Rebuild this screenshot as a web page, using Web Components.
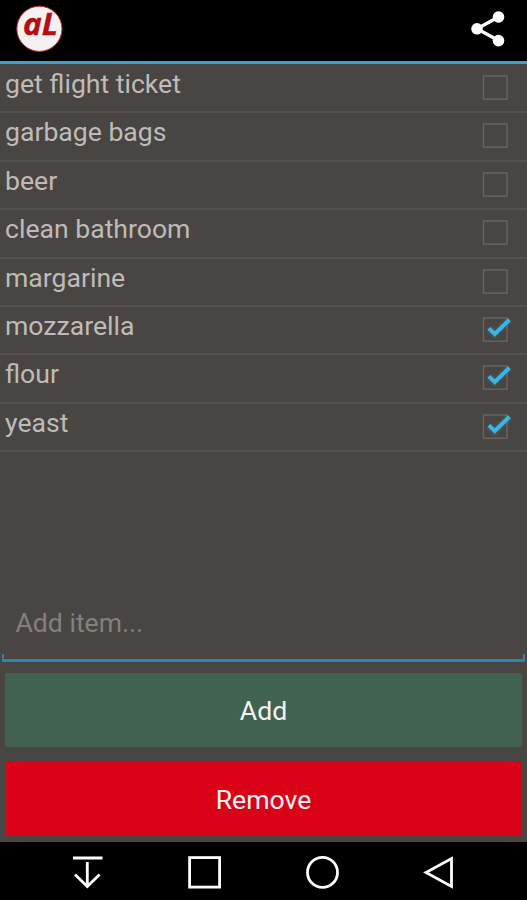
<!DOCTYPE html>
<html lang="en">
<head>
<meta charset="utf-8">
<title>Shopping list</title>
<style>
html,body{margin:0;height:100%;background:#494543;overflow:hidden;font-family:Roboto,"Liberation Sans",sans-serif}
</style>
</head>
<body>
<list-app></list-app>
<script>
const define = (name, html, setup) => customElements.define(name, class extends HTMLElement {
  constructor() {
    super();
    this.attachShadow({ mode: 'open' }).innerHTML = html;
  }
  connectedCallback() { if (setup) setup(this); }
});

define('app-bar', `
<style>
:host{display:flex;box-sizing:border-box;height:64px;flex:none;background:#000;border-bottom:3px solid #33a5d4;justify-content:space-between;padding:5px 20px 0 15px}
svg{display:block;overflow:visible}
.logo{width:48px;height:48px}
.share{width:38px;height:38px;margin-top:5px}
text{font:italic bold 29.5px "Open Sans","Noto Sans",sans-serif;fill:#b50d12;stroke:#b50d12;stroke-width:.4}
</style>
<svg class="logo" viewBox="0 0 48 48"><circle cx="24.4" cy="23.8" r="22.6" fill="#f3f1f1" stroke="#c02a2d" stroke-width="1"/><text x="8" y="29.8" textLength="35" lengthAdjust="spacingAndGlyphs">aL</text></svg>
<svg class="share" viewBox="0 0 38 38"><path d="M29.5 7 8 18.8 29.5 30.6" fill="none" stroke="#fff" stroke-width="3.4"/><g fill="#fff"><circle cx="29.5" cy="7" r="5.8"/><circle cx="8" cy="18.8" r="5.8"/><circle cx="29.5" cy="30.6" r="5.8"/></g></svg>`);

define('check-box', `
<style>
:host{display:block;width:30px;height:30px}
svg{display:block}
.tick{display:none}
:host([checked]) .tick{display:block}
</style>
<svg width="30" height="30" viewBox="0 0 30 30" fill="none"><rect x="1.5" y="5" width="23.5" height="23.2" stroke="#676361" stroke-width="1.5"/><g class="tick"><path d="M6.8 15.4 12.8 21 27.5 6.7" stroke="#33b5e5" stroke-opacity=".12" stroke-width="8"/><path d="M6.8 15.4 12.8 21 27.5 6.7" stroke="#38b6ea" stroke-width="4"/></g></svg>`);

define('list-item', `
<style>
:host{display:flex;box-sizing:border-box;height:48.4px;border-bottom:2px solid #555150;padding:0 15px 0 5px;justify-content:space-between;align-items:flex-start;color:#bebbb9;font-size:26.6px;line-height:32px}
span{padding-top:3px}
check-box{margin-top:6px}
</style>
<span><slot></slot></span><check-box></check-box>`, el => {
  el.shadowRoot.querySelector('check-box').toggleAttribute('checked', el.hasAttribute('checked'));
});

define('item-field', `
<style>
:host{display:flex;flex-direction:column;height:74px;padding:0 2px;color:#84807e;font-size:26.6px;line-height:32px}
span{padding:19px 0 0 13.5px;flex:1}
i{display:block;box-sizing:border-box;height:8px;border:2px solid #2b86ad;border-top:0;border-bottom-width:3px}
</style>
<span><slot></slot></span><i></i>`);

define('action-button', `
<style>
:host{display:flex;align-items:center;justify-content:center;height:74px;border-radius:2px;background:var(--fill);color:#f5f3f2;font-size:26.6px;line-height:32px}
span{padding-top:2px}
</style>
<span><slot></slot></span>`);

define('nav-bar', `
<style>
:host{display:flex;flex:none;box-sizing:border-box;height:58px;background:#000;padding:10px 68px 0 68px;justify-content:space-between}
svg{display:block;width:40px;height:40px;fill:none;stroke:#fff;stroke-width:2.8}
</style>
<svg viewBox="0 0 40 40"><path d="M5 6h29.5M19.3 10v25M7 22.5 19.3 34.5 31.6 22.5"/></svg>
<svg viewBox="0 0 40 40"><rect x="4.6" y="5.6" width="30" height="29.5"/></svg>
<svg viewBox="0 0 40 40"><circle cx="20.5" cy="20.4" r="15"/></svg>
<svg viewBox="0 0 40 40"><path d="M32.5 6.5V34.5L7 20.5Z"/></svg>`);

define('list-app', `
<style>
:host{display:flex;flex-direction:column;height:900px;width:527px;background:#494543}
main{flex:1;display:flex;flex-direction:column}
section{flex:1;padding-top:1px}
.actions{display:flex;flex-direction:column;gap:15px;padding:11px 5px 6px 5px}
</style>
<app-bar></app-bar>
<main>
<section>
<list-item>get flight ticket</list-item>
<list-item>garbage bags</list-item>
<list-item>beer</list-item>
<list-item>clean bathroom</list-item>
<list-item>margarine</list-item>
<list-item checked>mozzarella</list-item>
<list-item checked>flour</list-item>
<list-item checked>yeast</list-item>
</section>
<item-field>Add item...</item-field>
<div class="actions">
<action-button style="--fill:#416250">Add</action-button>
<action-button style="--fill:#da0216">Remove</action-button>
</div>
</main>
<nav-bar></nav-bar>`);
</script>
</body>
</html>
